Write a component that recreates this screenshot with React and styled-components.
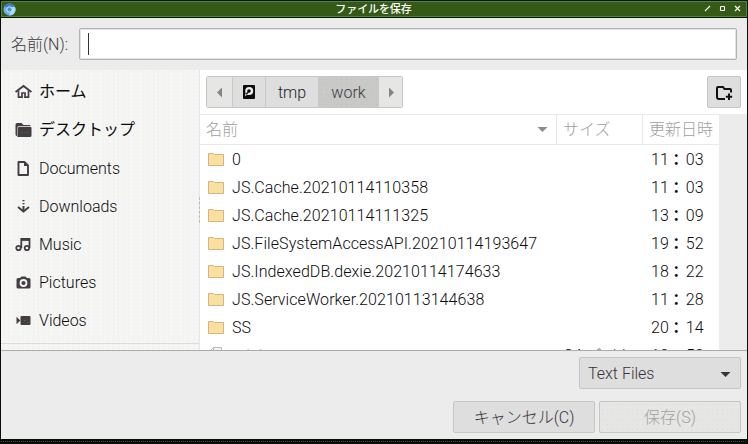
import React from "react";
import styled, { createGlobalStyle, css } from "styled-components";

const GlobalStyle = createGlobalStyle`
  * { box-sizing: border-box; }
  body { margin: 0; background: #0b0f0b; }
  svg { display: block; flex: none; }
`;

const Window = styled.div`
  width: 748px;
  height: 444px;
  padding: 1px 1px 5px;
  display: flex;
  flex-direction: column;
  overflow: hidden;
  background: #090c09;
  color: #0c0c0e;
  font: 300 16px/20px Roboto, "Noto Sans CJK JP", sans-serif;
  white-space: nowrap;
`;

const TitleBar = styled.header`
  height: 16px;
  flex: none;
  margin-bottom: 1px;
  border: 1px solid #508c20;
  background: #355a17;
  display: grid;
  grid-template-columns: 60px 1fr 60px;
  align-items: center;
  padding: 0 2px 0 1px;
`;

const Title = styled.h1`
  margin: 0;
  color: #fff;
  text-align: center;
  font: 500 11px/14px "Noto Sans CJK JP", sans-serif;
  letter-spacing: -0.1px;
  margin-top: -2px;
`;

const WindowControls = styled.div`
  display: flex;
  justify-content: flex-end;
  padding-right: 3px;
  gap: 8px;
  margin-top: -1px;
`;

const NameBar = styled.label`
  height: 52px;
  flex: none;
  background: #ececec;
  display: flex;
  align-items: flex-start;
  padding: 10px 10px 0;
  color: #3c363b;
`;

const NameLabel = styled.span`
  width: 68px;
  padding-top: 7px;
`;

const NameField = styled.span`
  flex: 1;
  height: 32px;
  border: 1px solid #b3b3b3;
  border-radius: 2px;
  background: #fff;
  box-shadow: inset 0 0 0 1px #e3e3e3;
  padding: 4px 8px;
`;

const Caret = styled.span`
  display: block;
  width: 1px;
  height: 22px;
  background: #3a343a;
`;

const Body = styled.main`
  height: 280px;
  flex: none;
  display: grid;
  grid-template-columns: 199px 1fr;
  background: #fff;
  overflow: hidden;
`;

const Sidebar = styled.nav`
  position: relative;
  background-color: #f5f5f4;
  background-image: radial-gradient(circle, #eeeeed 0.7px, transparent 0.8px);
  background-size: 5px 4px;
  border-right: 1px solid #e8e8e8;
  padding-top: 2px;
`;

const Place = styled.div`
  height: 38px;
  display: flex;
  align-items: center;
  padding: 1px 0 0 14px;
  gap: 7px;
  font-weight: ${(p) => (p.$japanese ? 400 : 300)};
`;

const PlaceName = styled.span`
  padding-top: ${(p) => (p.$japanese ? 0 : "2px")};
`;

const PlaceDivider = styled.div`
  height: 1px;
  margin-top: 5px;
  background: #dcdcdb;
`;

const PaneGrip = styled.span`
  position: absolute;
  right: -1px;
  top: 127px;
  height: 26px;
  border-right: 1px dashed #bbb;
`;

const Browser = styled.section`
  display: flex;
  flex-direction: column;
  overflow: hidden;
`;

const PathRow = styled.div`
  height: 44px;
  flex: none;
  display: flex;
  justify-content: space-between;
  align-items: flex-start;
  padding: 6px 6px 0;
`;

const PathBar = styled.div`
  display: grid;
  grid-template-columns: 26px 33px 53px 60px 25px;
  height: 32px;
  border: 1px solid #c6c6c5;
  width: 197px;
  border-radius: 2px;
  overflow: hidden;
`;

const PathSegment = styled.div`
  display: flex;
  align-items: center;
  justify-content: center;
  padding-top: ${(p) => (p.$label ? "1px" : 0)};
  color: #1f1c25;
  background-color: #dedede;
  border-right: 1px solid #c8c8c8;
  &:last-child { border-right: 0; padding-right: 3px; }
  ${(p) => p.$arrow && css`background-color: #e6e6e5;`}
  ${(p) => p.$active && css`
    color: #3f3741;
    background-color: #c9c9c7;
    background-image: radial-gradient(circle, #bdbdb9 0.8px, transparent 0.9px);
    background-size: 5px 5px;
  `}
`;

const Button = styled.button`
  appearance: none;
  margin: 0;
  width: ${(p) => p.$width}px;
  height: 32px;
  padding: ${(p) => (p.$spread ? "2px 9px 0 8px" : "1px 9px 0")};
  display: flex;
  align-items: center;
  justify-content: ${(p) => (p.$spread ? "space-between" : "center")};
  border: 1px solid #c6c6c6;
  border-radius: 2px;
  background-color: #dedede;
  color: #38313a;
  font: inherit;
  &:disabled {
    color: #a1a19f;
    background-color: #e6e6e4;
    background-image: radial-gradient(circle, #dcdcda 0.8px, transparent 0.9px);
    background-size: 5px 5px;
  }
`;

const ListArea = styled.div`
  flex: 1;
  min-height: 0;
  padding-right: 28px;
  background: #ececec;
`;

const FileTable = styled.div`
  height: 100%;
  background: #fff;
  overflow: hidden;
`;

const HeaderRow = styled.div`
  display: grid;
  grid-template-columns: 357px 86px 1fr;
  height: 31px;
  border-top: 1px solid #e9e9e9;
  border-bottom: 1px solid #e9e9e9;
`;

const HeaderCell = styled.div`
  display: flex;
  align-items: center;
  justify-content: space-between;
  padding: 0 9px 0 6px;
  color: #a0a09d;
  & + & { border-left: 1px solid #e6e6e6; margin-left: -1px; padding: 0 0 0 6px; }
`;

const FileRow = styled.div`
  display: grid;
  grid-template-columns: 24px 332px 87px 1fr;
  align-items: center;
  height: 28px;
  padding-left: 8px;
`;

const FileName = styled.span`
  padding-top: 2px;
  letter-spacing: 0.07px;
  color: ${(p) => (p.$dimmed ? "#a8a8a6" : "inherit")};
`;

const FileSize = styled.span`
  padding-top: 2px;
`;

const Time = styled.span`
  display: flex;
  padding-top: 2px;
`;

const Colon = styled.span`
  width: 17px;
  margin: -1px 0 1px;
  font: 700 15px/20px "Noto Sans CJK JP", sans-serif;
`;

const Footer = styled.footer`
  flex: 1;
  border-top: 1px solid #adadad;
  background: #ececec;
  display: flex;
  flex-direction: column;
  align-items: flex-end;
  gap: 12px;
  padding: 6px 6px 0 0;
`;

const Actions = styled.div`
  display: flex;
  gap: 4px;
`;

const BottomEdge = styled.div`
  flex: none;
  height: 1px;
  margin: 2px 0 -3px;
  background: repeating-linear-gradient(90deg, #454a45 0 1px, transparent 1px 2px);
`;

const AppLogo = () => (
  <svg width="13" height="13" viewBox="0 0 13 13">
    <circle cx="6.5" cy="6.5" r="6" fill="#69b2ee" />
    <path d="M1 4A6 6 0 0 1 12 4H6.5Z" fill="#3a7fcb" />
    <path d="M12 4A6 6 0 0 1 6 12.5L9 7V4Z" fill="#a4dcfa" />
    <circle cx="6.5" cy="6.5" r="2.7" fill="#4d90d5" stroke="#d9efff" />
  </svg>
);

const controlShapes = {
  minimize: <path d="M1 6L6 1" />,
  maximize: <rect x="1.5" y="1.5" width="4" height="4" rx="0.7" />,
  close: <path d="M1 1L6 6M6 1L1 6" />,
};

const ControlIcon = ({ kind }) => (
  <svg width="7" height="7" viewBox="0 0 7 7" fill="none" stroke="#fff" strokeWidth="1.1">
    {controlShapes[kind]}
  </svg>
);

const placeShapes = {
  home: (
    <g fill="none" stroke="#443e43" strokeWidth="2">
      <path d="M1 9L9 3L17 9" />
      <path d="M4 7.5V14.2H7.5V10H10.5V14.2H14V7.5" strokeWidth="1.7" />
    </g>
  ),
  desktop: (
    <g>
      <path d="M1 3.8Q1 2 2.5 2H7L9 4H15Q16 4 16 5.2H4.2Q3 5.2 3 6.5V15Q1 15 1 13.5Z" fill="#443e43" />
      <path d="M4.3 6H16Q17 6 17 7V14.5Q17 16 15.5 16H2.5Q3.5 15.5 3.5 13V7Q3.5 6 4.3 6Z" fill="#443e43" />
      <path d="M7 11.5h1M10 11.5h1M13 11.5h1" stroke="#4f8a20" />
    </g>
  ),
  documents: (
    <g>
      <path d="M4 3H10L13.5 6.5V16H4Z" fill="none" stroke="#443e43" strokeWidth="1.9" strokeLinejoin="round" />
      <path d="M9.5 3V7H13.5Z" fill="#443e43" />
    </g>
  ),
  downloads: (
    <g fill="none" stroke="#443e43" strokeWidth="2">
      <path d="M9 3v1.2M9 6v1.2M9 9V14" />
      <path d="M3.5 10L9 14.5L14.5 10" />
    </g>
  ),
  music: (
    <g fill="none" stroke="#443e43" strokeWidth="1.8">
      <circle cx="4" cy="13" r="2.2" />
      <circle cx="12.4" cy="13" r="2.2" />
      <path d="M6.8 13V4H15V13" />
      <path d="M6.8 4.8H15" strokeWidth="2.2" />
    </g>
  ),
  pictures: (
    <g>
      <path d="M3.5 5H5.5L7 3.5H11L12.5 5H14.5Q16 5 16 6.5V14Q16 15.5 14.5 15.5H3.5Q2 15.5 2 14V6.5Q2 5 3.5 5Z" fill="#443e43" />
      <circle cx="9" cy="10" r="3" fill="#443e43" stroke="#f5f5f4" strokeWidth="1.8" />
    </g>
  ),
  videos: (
    <g fill="#443e43">
      <rect x="6" y="5" width="10" height="9" rx="1" />
      <path d="M2 5.7L5.8 9.5L2 13.3Z" />
      <path d="M10 9.5h1M13 11.5h1" stroke="#4f8a20" />
    </g>
  ),
};

const PlaceIcon = ({ kind }) => (
  <svg width="17" height="18" viewBox="0.5 0 17 18">{placeShapes[kind]}</svg>
);

const FolderIcon = () => (
  <svg width="16" height="14" viewBox="0 0 16 14">
    <path d="M0.5 1.5H5.5L6.5 2.5H15.5V13.5H0.5Z" fill="#f9dfa0" stroke="#dbb47b" />
  </svg>
);

const SheetIcon = () => (
  <svg width="16" height="16" viewBox="0 0 16 16">
    <path d="M2.5 3.5L5.5 0.5H13.5V15.5H2.5ZM2.5 3.5H5.5V0.5" fill="#f3f3f3" stroke="#bababa" />
  </svg>
);

const arrowShapes = {
  left: "M8 0.5V10.5L3 5.5Z",
  right: "M4 0.5V10.5L9 5.5Z",
  down: "M0.5 3H10.5L5.5 8Z",
};

const Arrow = ({ direction, color }) => (
  <svg width="11" height="11" viewBox="0 0 11 11"><path d={arrowShapes[direction]} fill={color} /></svg>
);

const DiskIcon = () => (
  <svg width="14" height="14" viewBox="0 0 14 14">
    <rect x="1" width="12" height="14" rx="1" fill="#0c0b0c" />
    <circle cx="7.2" cy="6" r="4" fill="#eee" />
    <path d="M3 11L3.4 8.5L6 9.6Z" fill="#eee" />
    <circle cx="7" cy="6" r="1.8" fill="#0c0b0c" />
    <path d="M7 6L4.2 9.4" stroke="#0c0b0c" strokeWidth="1.2" />
  </svg>
);

const NewFolderIcon = () => (
  <svg width="17" height="16" viewBox="0 0 17 16" fill="none" stroke="#111" strokeWidth="2">
    <path d="M9 14H3Q1 14 1 12V3Q1 2 2 2H7L8.5 4H14Q15 4 15 5V7.5" />
    <path d="M13 8.5V15M9.8 11.7H16.2" />
  </svg>
);

const places = [
  ["home", "ホーム", true],
  ["desktop", "デスクトップ", true],
  ["documents", "Documents"],
  ["downloads", "Downloads"],
  ["music", "Music"],
  ["pictures", "Pictures"],
  ["videos", "Videos"],
];

const files = [
  ["0", "11", "03"],
  ["JS.Cache.20210114110358", "11", "03"],
  ["JS.Cache.20210114111325", "13", "09"],
  ["JS.FileSystemAccessAPI.20210114193647", "19", "52"],
  ["JS.IndexedDB.dexie.20210114174633", "18", "22"],
  ["JS.ServiceWorker.20210113144638", "11", "28"],
  ["SS", "20", "14"],
];

const FileTime = ({ hour, minute }) => (
  <Time>{hour}<Colon>：</Colon>{minute}</Time>
);

export default function App() {
  return (
    <Window>
      <GlobalStyle />
      <TitleBar>
        <AppLogo />
        <Title>ファイルを保存</Title>
        <WindowControls>
          <ControlIcon kind="minimize" />
          <ControlIcon kind="maximize" />
          <ControlIcon kind="close" />
        </WindowControls>
      </TitleBar>
      <NameBar>
        <NameLabel>名前(N):</NameLabel>
        <NameField><Caret /></NameField>
      </NameBar>
      <Body>
        <Sidebar>
          {places.map(([kind, name, japanese]) => (
            <Place key={kind} $japanese={japanese}>
              <PlaceIcon kind={kind} />
              <PlaceName $japanese={japanese}>{name}</PlaceName>
            </Place>
          ))}
          <PlaceDivider />
          <PaneGrip />
        </Sidebar>
        <Browser>
          <PathRow>
            <PathBar>
              <PathSegment $arrow><Arrow direction="left" color="#858584" /></PathSegment>
              <PathSegment><DiskIcon /></PathSegment>
              <PathSegment $label>tmp</PathSegment>
              <PathSegment $label $active>work</PathSegment>
              <PathSegment $arrow><Arrow direction="right" color="#858584" /></PathSegment>
            </PathBar>
            <Button $width={34}><NewFolderIcon /></Button>
          </PathRow>
          <ListArea>
            <FileTable>
              <HeaderRow>
                <HeaderCell>名前<Arrow direction="down" color="#8c8c89" /></HeaderCell>
                <HeaderCell>サイズ</HeaderCell>
                <HeaderCell>更新日時</HeaderCell>
              </HeaderRow>
              {files.map(([name, hour, minute]) => (
                <FileRow key={name}>
                  <FolderIcon />
                  <FileName>{name}</FileName>
                  <span />
                  <FileTime hour={hour} minute={minute} />
                </FileRow>
              ))}
              <FileRow>
                <SheetIcon />
                <FileName $dimmed>mini</FileName>
                <FileSize>84 バイト</FileSize>
                <FileTime hour="19" minute="53" />
              </FileRow>
            </FileTable>
          </ListArea>
        </Browser>
      </Body>
      <Footer>
        <Button $width={162} $spread>Text Files<Arrow direction="down" color="#393239" /></Button>
        <Actions>
          <Button $width={142}>キャンセル(C)</Button>
          <Button $width={142} disabled>保存(S)</Button>
        </Actions>
      </Footer>
      <BottomEdge />
    </Window>
  );
}
